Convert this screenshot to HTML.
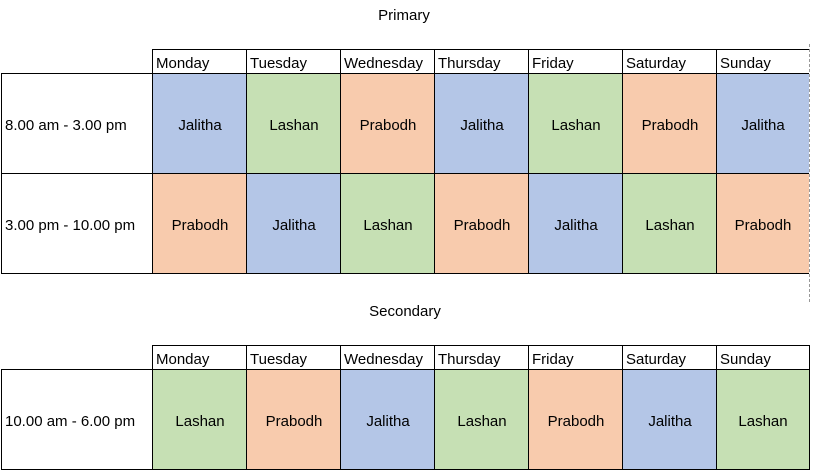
<!DOCTYPE html>
<html><head><meta charset="utf-8"><style>
body{margin:0;width:830px;height:474px;background:#fff;position:relative;overflow:hidden;font-family:"Liberation Sans",Arial,sans-serif;font-size:15px;color:#000}
.c{position:absolute;box-sizing:border-box;display:flex;align-items:center;justify-content:center;padding-top:2px}
.h{position:absolute;box-sizing:border-box;padding-left:3px;padding-top:5px;line-height:18px}
.b{background:#b4c6e7}.g{background:#c6e0b4}.o{background:#f8cbad}
.t{position:absolute;width:830px;text-align:center}
.ln{position:absolute;background:#000}
.dash{position:absolute;left:809px;width:0;border-left:1px dashed #999}
</style></head><body>
<div class="t" style="left:-11px;top:7px">Primary</div>
<div class="t" style="left:-10px;top:303px">Secondary</div>

<div class="h" style="left:153px;top:50px">Monday</div>
<div class="h" style="left:247px;top:50px">Tuesday</div>
<div class="h" style="left:341px;top:50px">Wednesday</div>
<div class="h" style="left:435px;top:50px">Thursday</div>
<div class="h" style="left:529px;top:50px">Friday</div>
<div class="h" style="left:623px;top:50px">Saturday</div>
<div class="h" style="left:717px;top:50px">Sunday</div>

<div class="c" style="left:1px;top:74px;width:151px;height:100px;justify-content:flex-start;padding-left:4px">8.00 am - 3.00 pm</div>
<div class="c b" style="left:153px;top:74px;width:94px;height:100px">Jalitha</div>
<div class="c g" style="left:247px;top:74px;width:94px;height:100px">Lashan</div>
<div class="c o" style="left:341px;top:74px;width:94px;height:100px">Prabodh</div>
<div class="c b" style="left:435px;top:74px;width:94px;height:100px">Jalitha</div>
<div class="c g" style="left:529px;top:74px;width:94px;height:100px">Lashan</div>
<div class="c o" style="left:623px;top:74px;width:94px;height:100px">Prabodh</div>
<div class="c b" style="left:717px;top:74px;width:92px;height:100px">Jalitha</div>

<div class="c" style="left:1px;top:174px;width:151px;height:100px;justify-content:flex-start;padding-left:4px">3.00 pm - 10.00 pm</div>
<div class="c o" style="left:153px;top:174px;width:94px;height:100px">Prabodh</div>
<div class="c b" style="left:247px;top:174px;width:94px;height:100px">Jalitha</div>
<div class="c g" style="left:341px;top:174px;width:94px;height:100px">Lashan</div>
<div class="c o" style="left:435px;top:174px;width:94px;height:100px">Prabodh</div>
<div class="c b" style="left:529px;top:174px;width:94px;height:100px">Jalitha</div>
<div class="c g" style="left:623px;top:174px;width:94px;height:100px">Lashan</div>
<div class="c o" style="left:717px;top:174px;width:92px;height:100px">Prabodh</div>

<div class="ln" style="left:152px;top:49px;width:657px;height:1px"></div>
<div class="ln" style="left:1px;top:73px;width:808px;height:1px"></div>
<div class="ln" style="left:1px;top:173px;width:808px;height:1px"></div>
<div class="ln" style="left:1px;top:273px;width:808px;height:1px"></div>
<div class="ln" style="left:1px;top:73px;width:1px;height:201px"></div>
<div class="ln" style="left:152px;top:49px;width:1px;height:225px"></div>
<div class="ln" style="left:246px;top:49px;width:1px;height:225px"></div>
<div class="ln" style="left:340px;top:49px;width:1px;height:225px"></div>
<div class="ln" style="left:434px;top:49px;width:1px;height:225px"></div>
<div class="ln" style="left:528px;top:49px;width:1px;height:225px"></div>
<div class="ln" style="left:622px;top:49px;width:1px;height:225px"></div>
<div class="ln" style="left:716px;top:49px;width:1px;height:225px"></div>
<div class="dash" style="top:44px;height:258px"></div>

<div class="h" style="left:153px;top:346px">Monday</div>
<div class="h" style="left:247px;top:346px">Tuesday</div>
<div class="h" style="left:341px;top:346px">Wednesday</div>
<div class="h" style="left:435px;top:346px">Thursday</div>
<div class="h" style="left:529px;top:346px">Friday</div>
<div class="h" style="left:623px;top:346px">Saturday</div>
<div class="h" style="left:717px;top:346px">Sunday</div>

<div class="c" style="left:1px;top:370px;width:151px;height:100px;justify-content:flex-start;padding-left:4px">10.00 am - 6.00 pm</div>
<div class="c g" style="left:153px;top:370px;width:94px;height:100px">Lashan</div>
<div class="c o" style="left:247px;top:370px;width:94px;height:100px">Prabodh</div>
<div class="c b" style="left:341px;top:370px;width:94px;height:100px">Jalitha</div>
<div class="c g" style="left:435px;top:370px;width:94px;height:100px">Lashan</div>
<div class="c o" style="left:529px;top:370px;width:94px;height:100px">Prabodh</div>
<div class="c b" style="left:623px;top:370px;width:94px;height:100px">Jalitha</div>
<div class="c g" style="left:717px;top:370px;width:92px;height:100px">Lashan</div>

<div class="ln" style="left:152px;top:345px;width:657px;height:1px"></div>
<div class="ln" style="left:1px;top:369px;width:808px;height:1px"></div>
<div class="ln" style="left:1px;top:469px;width:808px;height:1px"></div>
<div class="ln" style="left:1px;top:369px;width:1px;height:101px"></div>
<div class="ln" style="left:152px;top:345px;width:1px;height:125px"></div>
<div class="ln" style="left:246px;top:345px;width:1px;height:125px"></div>
<div class="ln" style="left:340px;top:345px;width:1px;height:125px"></div>
<div class="ln" style="left:434px;top:345px;width:1px;height:125px"></div>
<div class="ln" style="left:528px;top:345px;width:1px;height:125px"></div>
<div class="ln" style="left:622px;top:345px;width:1px;height:125px"></div>
<div class="ln" style="left:716px;top:345px;width:1px;height:125px"></div>
<div class="ln" style="left:809px;top:345px;width:1px;height:125px"></div>
</body></html>
